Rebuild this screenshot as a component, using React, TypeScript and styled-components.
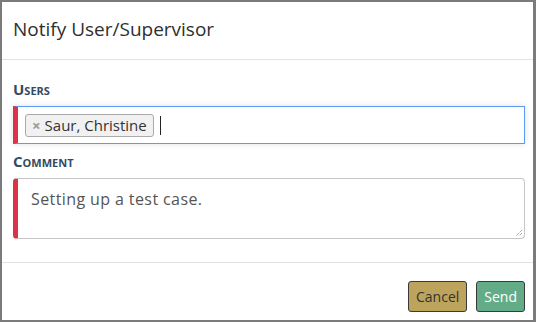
import React, { ReactElement } from 'react';
import styled, { createGlobalStyle } from 'styled-components';

// style  ---------------------------------------------------
const GlobalStyle = createGlobalStyle`
  html, body {
    margin: 0;
    padding: 0;
    background: #ffffff;
  }
  * {
    box-sizing: border-box;
  }
`;

const Modal = styled.div`
  width: 536px;
  height: 322px;
  border: 2px solid #7b7b7b;
  border-right-width: 3px;
  background: #fff;
  display: flex;
  flex-direction: column;
  font-family: 'Open Sans', 'Noto Sans', sans-serif;
  color: #333;
`;

const Header = styled.div`
  height: 58px;
  flex: none;
  display: flex;
  align-items: center;
  padding: 0 11px 3px;
  border-bottom: 1px solid #e2e2e2;
`;

const Title = styled.h4`
  margin: 0;
  font-size: 19px;
  font-weight: 400;
  color: #2f2f2f;
`;

const Body = styled.div`
  flex: 1;
  padding: 19px 8px 0 11px;
  display: flex;
  flex-direction: column;
`;

const Label = styled.label`
  display: block;
  font-size: 15px;
  font-weight: 700;
  font-variant: small-caps;
  color: #344a5f;
  line-height: 20px;
  margin-bottom: 7px;
`;

const FieldGroup = styled.div<{ gap?: number }>`
  margin-bottom: ${({ gap }) => gap ?? 0}px;
`;

const RequiredBox = styled.div<{ focused?: boolean; tall?: number }>`
  position: relative;
  height: ${({ tall }) => tall}px;
  display: flex;
  align-items: ${({ focused }) => (focused ? 'center' : 'flex-start')};
  gap: 6px;
  border: 1px solid ${({ focused }) => (focused ? '#5b9cf2' : '#c6c6c6')};
  border-left: 5px solid #db3447;
  border-radius: ${({ focused }) => (focused ? '0' : '4px')};
  box-shadow: ${({ focused }) =>
    focused ? '0 0 6px rgba(0, 0, 0, 0.12)' : 'none'};
  padding: ${({ focused }) => (focused ? '0 7px' : '9px 13px')};
  background: #fff;
`;

const Tag = styled.span`
  display: inline-flex;
  align-items: center;
  gap: 4px;
  height: 23px;
  padding: 0 6px 0 6px;
  background: #f1f1f1;
  border: 1px solid #aaa;
  border-radius: 3px;
  font-size: 15px;
  color: #333;
`;

const TagRemove = styled.span`
  font-size: 15px;
  font-weight: 700;
  color: #9a9a9a;
  line-height: 1;
`;

const Caret = styled.span`
  width: 1px;
  height: 19px;
  background: #222;
  margin-left: 0;
`;

const CommentText = styled.span`
  font-size: 16px;
  color: #555;
  letter-spacing: 0.4px;
`;

const ResizeGrip = styled.svg`
  position: absolute;
  right: 1px;
  bottom: 1px;
`;

const Footer = styled.div`
  height: 58px;
  flex: none;
  border-top: 1px solid #e2e2e2;
  display: flex;
  justify-content: flex-end;
  align-items: flex-start;
  gap: 9px;
  padding: 18px 8px 0 0;
`;

const Button = styled.button<{ bg: string; fg: string }>`
  height: 31px;
  padding: 0 7px;
  border: 1px solid #3a3a3a;
  border-radius: 3px;
  background: ${({ bg }) => bg};
  color: ${({ fg }) => fg};
  font-family: inherit;
  font-size: 14px;
`;

// Element  -------------------------------------------------
export default function App(): ReactElement {
  return (
    <>
      <GlobalStyle />
      <Modal>
        <Header>
          <Title>Notify User/Supervisor</Title>
        </Header>
        <Body>
          <FieldGroup gap={7}>
            <Label>Users</Label>
            <RequiredBox focused tall={38}>
              <Tag>
                <TagRemove>×</TagRemove>
                Saur, Christine
              </Tag>
              <Caret />
            </RequiredBox>
          </FieldGroup>
          <FieldGroup>
            <Label>Comment</Label>
            <RequiredBox tall={61}>
              <CommentText>Setting up a test case.</CommentText>
              <ResizeGrip width="9" height="9" viewBox="0 0 9 9">
                <path d="M8 2 L2 8 M8 5 L5 8" stroke="#777" strokeWidth="1" strokeDasharray="1 1" />
              </ResizeGrip>
            </RequiredBox>
          </FieldGroup>
        </Body>
        <Footer>
          <Button bg="#bda45c" fg="#333">Cancel</Button>
          <Button bg="#62ad88" fg="#fff">Send</Button>
        </Footer>
      </Modal>
    </>
  );
}
